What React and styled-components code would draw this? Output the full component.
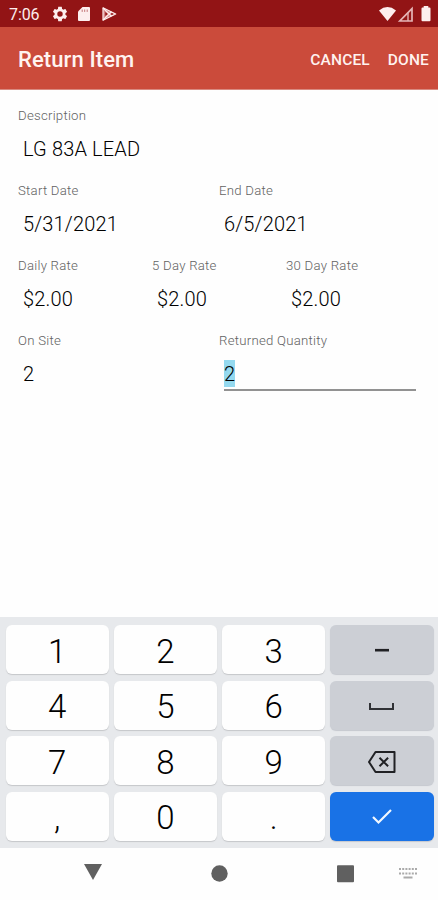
import React from "react";
import styled, { createGlobalStyle } from "styled-components";

const Global = createGlobalStyle`
  * { box-sizing: border-box; }
  body { margin: 0; background: #fff; font-family: Roboto, "Liberation Sans", sans-serif; }
`;

const Screen = styled.div`
  display: flex;
  flex-direction: column;
  width: 438px;
  height: 900px;
  overflow: hidden;
  background: #fefefe;
`;

const StatusBar = styled.header`
  display: flex;
  align-items: center;
  justify-content: space-between;
  height: 27px;
  padding: 1px 7px 0 9px;
  background: #921415;
  color: #fdeeee;
`;

const StatusGroup = styled.div`
  display: flex;
  align-items: center;
  gap: ${(p) => p.$gap}px;
`;

const Clock = styled.span`
  width: 33px;
  font-size: 16px;
  line-height: 27px;
  letter-spacing: -0.1px;
`;

const Icon = styled.svg`
  display: block;
  flex: none;
  overflow: visible;
`;

const AppBar = styled.div`
  display: flex;
  align-items: center;
  height: 63px;
  padding: 3px 9px 0 18px;
  background: #cb4b3b;
  border-bottom: 1px solid #d98a80;
  color: #fff3f0;
`;

const Title = styled.h1`
  flex: 1;
  margin: 0;
  font-size: 22px;
  font-weight: 500;
  letter-spacing: 0.1px;
`;

const Action = styled.button`
  margin: 0 0 0 18px;
  padding: 0;
  border: 0;
  background: none;
  color: inherit;
  font: 500 15.5px Roboto, sans-serif;
  letter-spacing: 0.15px;
`;

const Form = styled.main`
  flex: 1;
  padding: 16px 18px 0;
`;

const FieldRow = styled.div`
  display: grid;
  grid-template-columns: repeat(${(p) => p.$columns}, 1fr);
  height: 75px;
`;

const Field = styled.div`
  display: flex;
  flex-direction: column;
  align-items: flex-start;
`;

const Label = styled.label`
  font-size: 13.2px;
  font-weight: 300;
  line-height: 20px;
  letter-spacing: 0.25px;
  color: #626262;
`;

const Value = styled.div`
  width: ${(p) => (p.$active ? "192px" : "auto")};
  height: 31px;
  margin: 9px 0 0 5px;
  border-bottom: ${(p) => (p.$active ? "2px solid #929292" : "0")};
  font-size: 20px;
  font-weight: 300;
  line-height: 29px;
  letter-spacing: 0.15px;
  color: #000;
`;

const Selection = styled.span`
  display: block;
  width: 11px;
  height: 27px;
  line-height: 29px;
  background: #94d9ef;
`;

const Keyboard = styled.section`
  display: grid;
  grid-template-columns: repeat(4, 1fr);
  grid-auto-rows: 49px;
  gap: 6.5px 5px;
  height: 231px;
  padding: 8px 4.5px 0 5.5px;
  background: #e7e9ec;
`;

const tones = { digit: "#fefefe", tool: "#cccfd5", confirm: "#1972e6" };

const Key = styled.button`
  display: flex;
  align-items: center;
  justify-content: center;
  padding: 3px 0 0;
  border: 0;
  border-radius: 6px;
  background: ${(p) => tones[p.$tone]};
  box-shadow: 0 1px 1px ${(p) => (p.$tone === "digit" ? "#c5c7ca" : "#c5c8cf")};
  color: #000;
  font: 300 33px Roboto, sans-serif;
`;

const NavBar = styled.nav`
  display: grid;
  grid-template-columns: 156px 126px 126px 30px;
  justify-items: center;
  height: 52px;
  padding-top: 16px;
  background: #fefefe;
  color: #606060;
`;

const NavItem = styled.div`
  display: flex;
  justify-content: center;
  width: 20px;
  height: 20px;
  margin-left: ${(p) => p.$shift || 0}px;
`;

const rows = [
  [["Description", "LG 83A LEAD"]],
  [["Start Date", "5/31/2021"], ["End Date", "6/5/2021"]],
  [["Daily Rate", "$2.00"], ["5 Day Rate", "$2.00"], ["30 Day Rate", "$2.00"]],
  [["On Site", "2"], ["Returned Quantity", "2", true]],
];

const Minus = () => (
  <Icon width="14" height="4" viewBox="0 0 14 4"><path d="M0 1.2h14" stroke="#202124" strokeWidth="2.6" /></Icon>
);
const Space = () => (
  <Icon width="25" height="8" viewBox="0 0 25 8"><path d="M1 0v6h23V0" fill="none" stroke="#303236" strokeWidth="2" /></Icon>
);
const Backspace = () => (
  <Icon width="28" height="22" viewBox="0 0 28 22" fill="none" stroke="#202124" strokeWidth="2">
    <path d="M7.5 1H26.5V21H7.5L1 11Z" strokeLinejoin="round" />
    <path d="M11.5 6.7l8.6 8.6M20.1 6.7l-8.6 8.6" />
  </Icon>
);
const Check = () => (
  <Icon width="20" height="15" viewBox="0 0 20 15"><path d="M1 7l5.5 5.5L19 0" fill="none" stroke="#f2f8ff" strokeWidth="2.2" /></Icon>
);

const keys = [
  "1", "2", "3", <Minus />,
  "4", "5", "6", <Space />,
  "7", "8", "9", <Backspace />,
  ",", "0", ".", <Check />,
];

const toneOf = (i) => (i === 15 ? "confirm" : i % 4 === 3 ? "tool" : "digit");

export default function App() {
  return (
    <Screen>
      <Global />
      <StatusBar>
        <StatusGroup $gap={10}>
          <Clock>7:06</Clock>
          <Icon width="16" height="16" viewBox="1.4 1.4 21.2 21.2" fill="currentColor">
            <path fillRule="evenodd" d="M19.14 12.94c.04-.3.06-.61.06-.94s-.02-.64-.07-.94l2.03-1.58c.18-.14.23-.41.12-.61l-1.92-3.32c-.12-.22-.37-.29-.59-.22l-2.39.96c-.5-.38-1.03-.7-1.62-.94L14.4 2.81c-.04-.24-.24-.41-.48-.41h-3.84c-.24 0-.43.17-.47.41l-.36 2.54c-.59.24-1.13.57-1.62.94l-2.39-.96c-.22-.08-.47 0-.59.22L2.74 8.87c-.12.21-.08.47.12.61l2.03 1.58c-.05.3-.09.63-.09.94s.02.64.07.94l-2.03 1.58c-.18.14-.23.41-.12.61l1.92 3.32c.12.22.37.29.59.22l2.39-.96c.5.38 1.03.7 1.62.94l.36 2.54c.05.24.24.41.48.41h3.84c.24 0 .44-.17.47-.41l.36-2.54c.59-.24 1.13-.56 1.62-.94l2.39.96c.22.08.47 0 .59-.22l1.92-3.32c.12-.22.07-.47-.12-.61ZM12 15.6a3.6 3.6 0 1 1 0-7.2 3.6 3.6 0 0 1 0 7.2Z" />
          </Icon>
          <Icon width="12" height="14" viewBox="0 0 12 14">
            <path d="M4.5 0H11a1 1 0 0 1 1 1v12a1 1 0 0 1-1 1H1a1 1 0 0 1-1-1V4.5Z" fill="currentColor" />
            <path d="M4.2 2.5v2.4M6.7 2.5v2.4M9.2 2.5v2.4" stroke="#c27577" strokeWidth="1" />
          </Icon>
          <Icon width="15" height="14" viewBox="-2 0 15 14">
            <path d="M1 .8 13.7 7 1 13.2Z" fill="#d48385" stroke="currentColor" strokeWidth="1.2" strokeLinejoin="round" />
            <path d="M1 1l8.5 8.2M1 13l8.5-8.2" stroke="currentColor" strokeWidth="1.2" />
            <path d="M3.3 5v4L5.6 7ZM8.5 7l1.5-1L11.3 7l-1.3 1Z" fill="#921415" />
          </Icon>
        </StatusGroup>
        <StatusGroup $gap={2}>
          <Icon width="17" height="14" viewBox="0 0 17 14"><path d="M8.5 14 0 3.4Q8.5-3.2 17 3.4Z" fill="currentColor" /></Icon>
          <Icon width="15" height="15" viewBox="0 0 15 15">
            <path d="M1.8 14H14V1.6Z" fill="none" stroke="#e5b5b6" strokeWidth="1.7" />
            <path d="M10 5.5V14" stroke="#e5b5b6" strokeWidth="1.4" />
          </Icon>
          <Icon width="16" height="16" viewBox="0 0 16 16"><path d="M8.7 1.5V0h4.6v1.5h1.2a1 1 0 0 1 1 1v11.8a1 1 0 0 1-1 1h-7a1 1 0 0 1-1-1V2.5a1 1 0 0 1 1-1Z" fill="currentColor" /></Icon>
        </StatusGroup>
      </StatusBar>
      <AppBar>
        <Title>Return Item</Title>
        <Action>CANCEL</Action>
        <Action>DONE</Action>
      </AppBar>
      <Form>
        {rows.map((row, r) => (
          <FieldRow key={r} $columns={row.length}>
            {row.map(([label, value, active]) => (
              <Field key={label}>
                <Label>{label}</Label>
                <Value $active={active}>{active ? <Selection>{value}</Selection> : value}</Value>
              </Field>
            ))}
          </FieldRow>
        ))}
      </Form>
      <Keyboard>
        {keys.map((face, i) => <Key key={i} $tone={toneOf(i)}>{face}</Key>)}
      </Keyboard>
      <NavBar>
        <NavItem $shift={30}>
          <Icon width="18" height="16" viewBox="0 0 18 16"><path d="M0 0H18L9 16Z" fill="currentColor" /></Icon>
        </NavItem>
        <NavItem>
          <Icon width="17" height="18" viewBox="0 0 17 18"><circle cx="8.5" cy="9.5" r="8.2" fill="currentColor" /></Icon>
        </NavItem>
        <NavItem>
          <Icon width="17" height="18" viewBox="0 0 17 18"><rect y="1.2" width="17" height="17" rx="1" fill="currentColor" /></Icon>
        </NavItem>
        <NavItem $shift={-30}>
          <Icon width="18" height="18" viewBox="0 0 18 18" stroke="#aaa" strokeWidth="2">
            <path d="M0 5h18M0 9.5h18" strokeDasharray="2 1.2" />
            <path d="M4.5 13.5h9" />
          </Icon>
        </NavItem>
      </NavBar>
    </Screen>
  );
}
